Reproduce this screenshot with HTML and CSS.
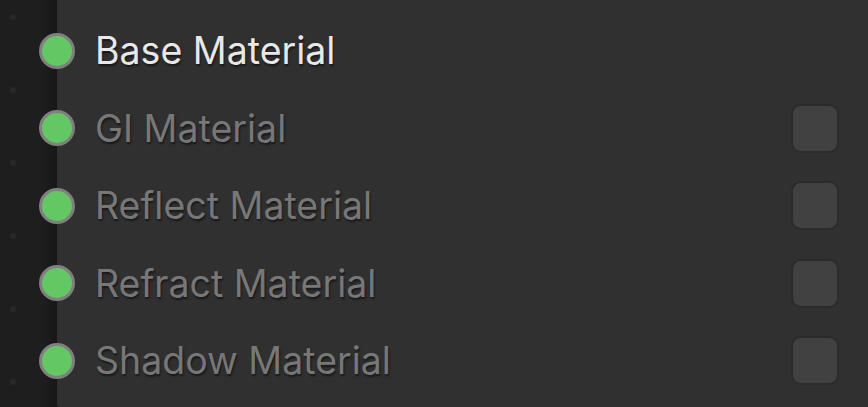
FILE: index.html
```html
<!DOCTYPE html>
<html>
<head>
<meta charset="utf-8">
<link rel="stylesheet" href="styles.css">
</head>
<body>
<div class="app">
  <div class="strip">
    <span class="dot"></span><span class="dot"></span><span class="dot"></span>
    <span class="dot"></span><span class="dot"></span><span class="dot"></span>
  </div>
  <div class="panel">
    <div class="row">
      <span class="socket"></span>
      <span class="label active">Base Material</span>
    </div>
    <div class="row">
      <span class="socket"></span>
      <span class="label">GI Material</span>
      <span class="check"></span>
    </div>
    <div class="row">
      <span class="socket"></span>
      <span class="label">Reflect Material</span>
      <span class="check"></span>
    </div>
    <div class="row">
      <span class="socket"></span>
      <span class="label">Refract Material</span>
      <span class="check"></span>
    </div>
    <div class="row">
      <span class="socket"></span>
      <span class="label">Shadow Material</span>
      <span class="check"></span>
    </div>
  </div>
</div>
</body>
</html>
```
FILE: styles.css
```css
html, body {
  margin: 0;
  padding: 0;
  width: 868px;
  height: 407px;
  overflow: hidden;
  background: #1d1d1d;
  font-family: Inter, "Noto Sans", sans-serif;
}
.app {
  display: flex;
  height: 407px;
}
.strip {
  width: 57px;
  flex: none;
  display: flex;
  flex-direction: column;
  padding-top: 14px;
  padding-left: 10px;
  gap: 67px;
  box-sizing: border-box;
  background: linear-gradient(to right, #1e1e1e 0, #1e1e1e 40px, #171717 57px);
}
.dot {
  width: 6px;
  height: 6px;
  border-radius: 50%;
  background: #282828;
}
.panel {
  flex: 1;
  height: 407px;
  box-sizing: border-box;
  background: #303030;
  border-bottom-left-radius: 3px;
  display: flex;
  flex-direction: column;
  padding-top: 12px;
}
.row {
  height: 77.5px;
  flex: none;
  display: flex;
  align-items: center;
  position: relative;
  padding-left: 38px;
  padding-right: 29px;
}
.socket {
  position: absolute;
  left: -18px;
  top: 50%;
  margin-top: -18px;
  width: 30px;
  height: 30px;
  border-radius: 50%;
  background: #63c763;
  border: 3px solid #7f7f7f;
}
.label {
  font-size: 37.5px;
  color: #777777;
  text-shadow: 1px 2px 2px rgba(0,0,0,0.5);
  flex: 1;
}
.label.active {
  color: #e8e8e8;
}
.check {
  width: 44px;
  height: 45px;
  border-radius: 10px;
  background: #414141;
  border: 2px solid #2b2b2b;
  flex: none;
}
```
